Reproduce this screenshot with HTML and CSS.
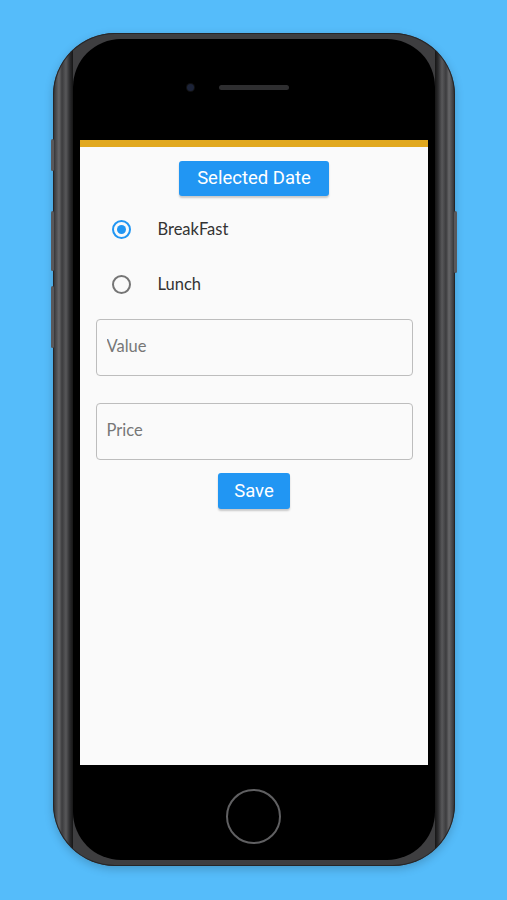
FILE: index.html
```html
<!DOCTYPE html>
<html lang="en">
<head>
    <meta charset="UTF-8">
    <meta name="viewport" content="width=device-width, initial-scale=1.0">
    <title>Meal Entry</title>
    <link rel="stylesheet" href="styles.css">
</head>
<body>

<div class="phone">
    <!-- side buttons -->
    <span class="side-btn mute"></span>
    <span class="side-btn vol-up"></span>
    <span class="side-btn vol-down"></span>
    <span class="side-btn power"></span>

    <div class="bezel">
        <div class="bezel-top">
            <span class="camera"></span>
            <span class="speaker"></span>
        </div>

        <div class="screen">
            <button class="btn date-btn">Selected Date</button>

            <label class="radio-row">
                <input type="radio" name="meal" checked>
                <span class="radio-mark"></span>
                <span class="radio-label">BreakFast</span>
            </label>
            <label class="radio-row">
                <input type="radio" name="meal">
                <span class="radio-mark"></span>
                <span class="radio-label">Lunch</span>
            </label>

            <input class="field" type="text" placeholder="Value">
            <input class="field" type="text" placeholder="Price">

            <button class="btn save-btn">Save</button>
        </div>

        <div class="bezel-bottom">
            <span class="home-btn"></span>
        </div>
    </div>
</div>

</body>
</html>
```

FILE: styles.css
```css
/* General Styles */
body {
    margin: 0;
    padding: 0;
    height: 900px;
    display: flex;
    justify-content: center;
    align-items: center;
    background-color: #55bcfa;
    font-family: Lato, "Open Sans", sans-serif;
}

/* Phone frame */
.phone {
    position: relative;
    width: 402px;
    height: 833px;
    margin-bottom: 2px;
    box-sizing: border-box;
    padding: 6px 20px;
    border-radius: 62px;
    background: linear-gradient(90deg,
        #2d2d2f 0px, #4a4a4c 3px, #666668 6px, #3c3c3e 9px, #58585a 13px, #2a2a2c 17px, #161616 20px,
        #3e3e40 20px, #3e3e40 calc(100% - 20px),
        #161616 calc(100% - 20px), #2a2a2c calc(100% - 17px), #58585a calc(100% - 13px),
        #3c3c3e calc(100% - 9px), #666668 calc(100% - 6px), #4a4a4c calc(100% - 3px), #2d2d2f 100%);
    box-shadow: inset 0 0 0 1px #262628, 0 3px 10px rgba(0, 0, 0, 0.2);
}

.side-btn {
    position: absolute;
    width: 3px;
    border-radius: 2px;
    background-color: #58585b;
}
.mute { left: -2px; top: 106px; height: 32px; }
.vol-up { left: -2px; top: 178px; height: 60px; }
.vol-down { left: -2px; top: 253px; height: 62px; }
.power { right: -2px; top: 178px; height: 62px; }

.bezel {
    height: 100%;
    box-sizing: border-box;
    padding: 0 7px;
    border-radius: 48px;
    background-color: #000;
    display: flex;
    flex-direction: column;
}

.bezel-top {
    height: 101px;
    display: flex;
    justify-content: center;
    align-items: flex-start;
    gap: 25px;
    padding-right: 32px;
    padding-top: 46px;
    box-sizing: border-box;
}

.camera {
    width: 7px;
    height: 7px;
    margin-top: -1px;
    border-radius: 50%;
    background-color: #1c2338;
    box-shadow: 0 0 0 1px #111;
}

.speaker {
    width: 70px;
    height: 5px;
    border-radius: 3px;
    background-color: #2e2e30;
}

.bezel-bottom {
    height: 95px;
    display: flex;
    justify-content: center;
    align-items: flex-start;
    padding-top: 24px;
    box-sizing: border-box;
}

.home-btn {
    width: 51px;
    height: 51px;
    border-radius: 50%;
    border: 2px solid #606062;
}

/* Screen */
.screen {
    flex: 1;
    background-color: #fafafa;
    border-top: 7px solid #e1a81f;
    display: flex;
    flex-direction: column;
    align-items: center;
    padding: 14px 15px 0 16px;
}

.btn {
    border: none;
    border-radius: 3px;
    background-color: #2196f3;
    color: white;
    font-family: Roboto, sans-serif;
    font-size: 18.5px;
    cursor: pointer;
    box-shadow: 0 2px 2px rgba(0, 0, 0, 0.2);
}

.date-btn {
    width: 150px;
    height: 35px;
    margin-bottom: 6px;
}

.save-btn {
    width: 72px;
    height: 36px;
    margin-top: 13px;
}

.radio-row {
    align-self: stretch;
    height: 55px;
    display: flex;
    align-items: center;
    cursor: pointer;
}

.radio-row input {
    display: none;
}

.radio-mark {
    width: 15px;
    height: 15px;
    margin-left: 16px;
    border-radius: 50%;
    border: 2px solid #757575;
    display: flex;
    justify-content: center;
    align-items: center;
}

.radio-row input:checked + .radio-mark {
    border-color: #2196f3;
}

.radio-row input:checked + .radio-mark::after {
    content: "";
    width: 9px;
    height: 9px;
    border-radius: 50%;
    background-color: #2196f3;
}

.radio-label {
    margin-left: 27px;
    font-size: 16.5px;
    color: #333;
}

.field {
    align-self: stretch;
    height: 57px;
    box-sizing: border-box;
    padding: 0 10px 3px;
    border: 1px solid #bdbdbd;
    border-radius: 4px;
    background-color: #fafafa;
    font-family: Lato, "Open Sans", sans-serif;
    font-size: 16.5px;
    color: #333;
    outline: none;
}

.field::placeholder {
    color: #777;
}

.field + .field {
    margin-top: 27px;
}

.radio-row + .field {
    margin-top: 7px;
}
```
